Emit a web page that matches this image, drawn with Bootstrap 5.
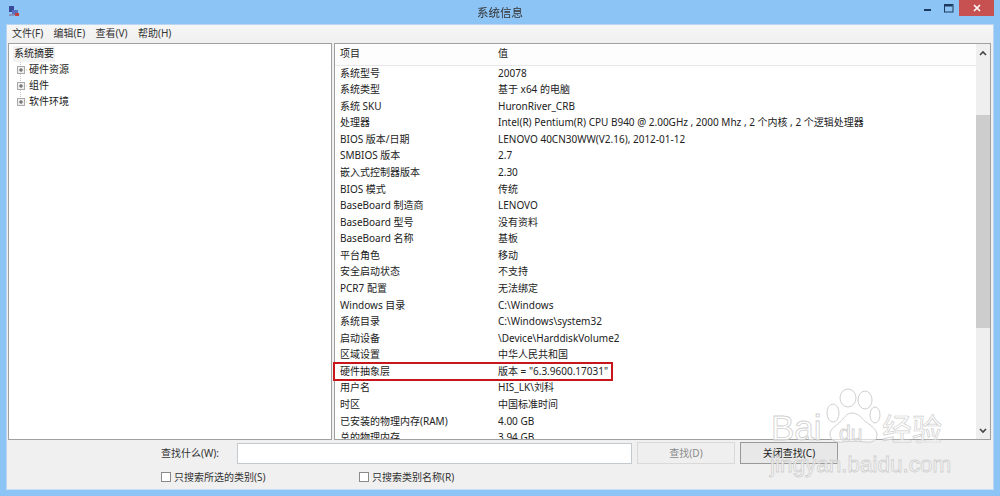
<!DOCTYPE html>
<html lang="zh"><head><meta charset="utf-8"><title>系统信息</title>
<link href="https://cdn.jsdelivr.net/npm/bootstrap@5.3.0/dist/css/bootstrap.min.css" rel="stylesheet">
<style>
html,body{height:496px;overflow:hidden;margin:0}
body{background:#8cc4f5;font:10px/16.5px "Noto Sans","Noto Sans CJK SC",sans-serif;color:#222;position:relative;filter:blur(.3px)}
.win-title{height:24px;position:relative}
.win-title-text{line-height:25px;text-align:center;font-size:11.5px;color:#333}
.app-ico{position:absolute;left:8px;top:5px}
.win-btns{position:absolute;right:6px;top:0;height:16px}
.wb{width:21px;height:16px}
.wb-close{width:35px;background:#c75050;color:#fff}
.win-body{height:466px;margin:0 6px;background:#f0f0f0;border:1px solid #b9d7f2;border-bottom-color:#c7dff5}
.menu-row{height:18px;background:linear-gradient(#f6f6f6,#f0f0f0);padding:0 0 2px 5px;gap:10.4px;line-height:14px;font-size:10px;color:#333}
.panes{height:397px;gap:2px;padding:0 2px 0 1px}
.tree-pane{width:324px;background:#fff;border:1px solid #a0a0a0;padding:2px 0 0 4px;line-height:15.7px}
.tree-root{background:#f2f2f2;display:inline-block;padding:0 1px;margin-bottom:-3px}
.tree-item{display:flex;align-items:center;gap:1px;padding-left:3px;height:16px}
.tree-box{width:12px;height:16px;flex:none}
.data-pane{flex:1;background:#fff;border:1px solid #a0a0a0;min-width:0;overflow:hidden}
.data-main{flex:1;min-width:0;overflow:hidden}
.data-head{height:21.5px;background:#fdfdfd;border-bottom:1px solid #e8e8e8;line-height:18px}
.cell-k{width:163px;padding-left:5px;flex:none;white-space:nowrap}
.cell-v{white-space:nowrap}
.data-row{height:16.58px;line-height:15.5px}
.sbar{width:14px;background:#efefef;flex:none;position:relative}
.sb-thumb{position:absolute;top:71px;left:0;right:0;height:213px;background:#cdcdcd}
.sb-up{position:absolute;top:6px;left:3px}
.sb-dn{position:absolute;bottom:5px;left:3px}
.find-area{height:48px;padding-left:154px;padding-top:2px;color:#333}
.find-label{width:76px;line-height:19px}
.find-input{width:395px;height:21px;background:#fff;border:1px solid #c4c9ce}
.act-find{width:98px;height:22px;margin-left:5px;border:1px solid #d9d9d9;background:#efefef;color:#8a8a8a;line-height:20px;text-align:center}
.act-close{width:98px;height:22px;margin-left:5px;border:1px solid #999;background:#e8e8e8;color:#222;line-height:20px;text-align:center}
.chk{width:10px;height:10px;border:1px solid #8a8a8a;background:#fff;flex:none;margin-right:3px}
.chk-row{margin-top:5px;line-height:16px}
.chk-a{width:198px}
.hl-box{position:absolute;left:333px;top:362px;width:280px;height:19px;border:2px solid #c8161d;pointer-events:none}
.wm-svg{position:absolute;left:750px;top:380px;pointer-events:none}
.wm-text{font-family:"Liberation Sans",sans-serif;fill:#fff;fill-opacity:.6;stroke:#cfcfcf;stroke-width:.8}
.wm-cn{font-family:"Noto Sans CJK SC",sans-serif;fill:#fff;fill-opacity:.6;stroke:#cfcfcf;stroke-width:.7}
.wm-shape{fill:#fff;fill-opacity:.6;stroke:#cfcfcf;stroke-width:1}
</style></head>
<body>
<div class="win-title">
  <svg class="app-ico" width="12" height="13" viewBox="0 0 12 13"><rect x="1" y="1" width="5" height="6" fill="#3a4a9a"/><rect x="4" y="5" width="6" height="5" fill="#5a6fc0"/><rect x="7" y="8" width="4" height="3" fill="#c04040"/><rect x="1" y="9" width="5" height="2" fill="#8a8fb5"/></svg>
  <div class="win-title-text">系统信息</div>
  <div class="win-btns d-flex align-items-center">
    <div class="wb d-flex align-items-center justify-content-center"><svg width="8" height="5" viewBox="0 0 8 5"><rect width="7" height="2" y="3" fill="#1c3a5e"/></svg></div>
    <div class="wb d-flex align-items-center justify-content-center"><svg width="10" height="9" viewBox="0 0 10 9" fill="none"><rect x=".5" y=".5" width="8.5" height="7.5" stroke="#1c3a5e"/><rect x="1" y="1" width="7.5" height="1.5" fill="#1c3a5e"/></svg></div>
    <div class="wb wb-close d-flex align-items-center justify-content-center"><svg width="8" height="8" viewBox="0 0 8 8"><path d="M1 1l6 6M7 1l-6 6" stroke="#fff" stroke-width="1.6"/></svg></div>
  </div>
</div>
<div class="win-body d-flex flex-column">
  <div class="menu-row d-flex align-items-center"><span>文件(F)</span><span>编辑(E)</span><span>查看(V)</span><span>帮助(H)</span></div>
  <div class="panes d-flex">
    <div class="tree-pane">
      <div class="tree-root">系统摘要</div>
      <div class="tree-item"><svg class="tree-box" viewBox="0 0 12 16"><path d="M4.5 0v16M8 8h4" stroke="#ccc" stroke-dasharray="1 1"/><rect x="1.5" y="4.5" width="7" height="7" fill="#eee" stroke="#aaa"/><path d="M3 8h4M5 6v4" stroke="#555"/></svg><span>硬件资源</span></div>
      <div class="tree-item"><svg class="tree-box" viewBox="0 0 12 16"><path d="M4.5 0v16M8 8h4" stroke="#ccc" stroke-dasharray="1 1"/><rect x="1.5" y="4.5" width="7" height="7" fill="#eee" stroke="#aaa"/><path d="M3 8h4M5 6v4" stroke="#555"/></svg><span>组件</span></div>
      <div class="tree-item"><svg class="tree-box" viewBox="0 0 12 16"><path d="M4.5 0v8M8 8h4" stroke="#ccc" stroke-dasharray="1 1"/><rect x="1.5" y="4.5" width="7" height="7" fill="#eee" stroke="#aaa"/><path d="M3 8h4M5 6v4" stroke="#555"/></svg><span>软件环境</span></div>
    </div>
    <div class="data-pane d-flex">
      <div class="data-main">
        <div class="data-head d-flex"><div class="cell-k">项目</div><div class="cell-v">值</div></div>
        <div class="data-row d-flex"><div class="cell-k">系统型号</div><div class="cell-v">20078</div></div>
        <div class="data-row d-flex"><div class="cell-k">系统类型</div><div class="cell-v">基于 x64 的电脑</div></div>
        <div class="data-row d-flex"><div class="cell-k">系统 SKU</div><div class="cell-v">HuronRiver_CRB</div></div>
        <div class="data-row d-flex"><div class="cell-k">处理器</div><div class="cell-v">Intel(R) Pentium(R) CPU B940 @ 2.00GHz , 2000 Mhz , 2 个内核 , 2 个逻辑处理器</div></div>
        <div class="data-row d-flex"><div class="cell-k">BIOS 版本/日期</div><div class="cell-v">LENOVO 40CN30WW(V2.16), 2012-01-12</div></div>
        <div class="data-row d-flex"><div class="cell-k">SMBIOS 版本</div><div class="cell-v">2.7</div></div>
        <div class="data-row d-flex"><div class="cell-k">嵌入式控制器版本</div><div class="cell-v">2.30</div></div>
        <div class="data-row d-flex"><div class="cell-k">BIOS 模式</div><div class="cell-v">传统</div></div>
        <div class="data-row d-flex"><div class="cell-k">BaseBoard 制造商</div><div class="cell-v">LENOVO</div></div>
        <div class="data-row d-flex"><div class="cell-k">BaseBoard 型号</div><div class="cell-v">没有资料</div></div>
        <div class="data-row d-flex"><div class="cell-k">BaseBoard 名称</div><div class="cell-v">基板</div></div>
        <div class="data-row d-flex"><div class="cell-k">平台角色</div><div class="cell-v">移动</div></div>
        <div class="data-row d-flex"><div class="cell-k">安全启动状态</div><div class="cell-v">不支持</div></div>
        <div class="data-row d-flex"><div class="cell-k">PCR7 配置</div><div class="cell-v">无法绑定</div></div>
        <div class="data-row d-flex"><div class="cell-k">Windows 目录</div><div class="cell-v">C:\Windows</div></div>
        <div class="data-row d-flex"><div class="cell-k">系统目录</div><div class="cell-v">C:\Windows\system32</div></div>
        <div class="data-row d-flex"><div class="cell-k">启动设备</div><div class="cell-v">\Device\HarddiskVolume2</div></div>
        <div class="data-row d-flex"><div class="cell-k">区域设置</div><div class="cell-v">中华人民共和国</div></div>
        <div class="data-row d-flex"><div class="cell-k">硬件抽象层</div><div class="cell-v">版本 = "6.3.9600.17031"</div></div>
        <div class="data-row d-flex"><div class="cell-k">用户名</div><div class="cell-v">HIS_LK\刘科</div></div>
        <div class="data-row d-flex"><div class="cell-k">时区</div><div class="cell-v">中国标准时间</div></div>
        <div class="data-row d-flex"><div class="cell-k">已安装的物理内存(RAM)</div><div class="cell-v">4.00 GB</div></div>
        <div class="data-row d-flex"><div class="cell-k">总的物理内存</div><div class="cell-v">3.94 GB</div></div>
      </div>
      <div class="sbar">
        <svg class="sb-up" width="8" height="6" viewBox="0 0 8 6"><path d="M1 5l3-3 3 3" fill="none" stroke="#444" stroke-width="1.6"/></svg>
        <div class="sb-thumb"></div>
        <svg class="sb-dn" width="8" height="6" viewBox="0 0 8 6"><path d="M1 1l3 3 3-3" fill="none" stroke="#444" stroke-width="1.6"/></svg>
      </div>
    </div>
  </div>
  <div class="find-area">
    <div class="d-flex align-items-center">
      <div class="find-label">查找什么(W):</div>
      <div class="find-input"></div>
      <div class="act-find">查找(D)</div>
      <div class="act-close">关闭查找(C)</div>
    </div>
    <div class="chk-row d-flex align-items-center">
      <div class="chk-a d-flex align-items-center"><span class="chk"></span><span>只搜索所选的类别(S)</span></div>
      <div class="d-flex align-items-center"><span class="chk"></span><span>只搜索类别名称(R)</span></div>
    </div>
  </div>
</div>
<div class="hl-box"></div>
<svg class="wm-svg" width="210" height="105" viewBox="0 0 210 105">
  <ellipse class="wm-shape" cx="83" cy="33" rx="6" ry="9"/>
  <ellipse class="wm-shape" cx="98" cy="18" rx="8" ry="9"/>
  <ellipse class="wm-shape" cx="115" cy="20" rx="7" ry="9"/>
  <ellipse class="wm-shape" cx="125" cy="35" rx="5" ry="8"/>
  <path class="wm-shape" d="M102 33c7 0 10 6 14 9 6 4 11 8 11 13 0 6-6 8-12 7-8-1-14-1-22 0-6 1-13-1-13-8 0-5 6-8 10-12 4-3 6-9 12-9z"/>
  <text class="wm-text" x="21" y="60" font-size="35">Bai</text>
  <text class="wm-text" x="89" y="60" font-size="21">du</text>
  <text class="wm-cn" x="132" y="60" font-size="30">经验</text>
  <text class="wm-text" x="20" y="92" font-size="22.5">jingyan.baidu.com</text>
</svg>
</body></html>
